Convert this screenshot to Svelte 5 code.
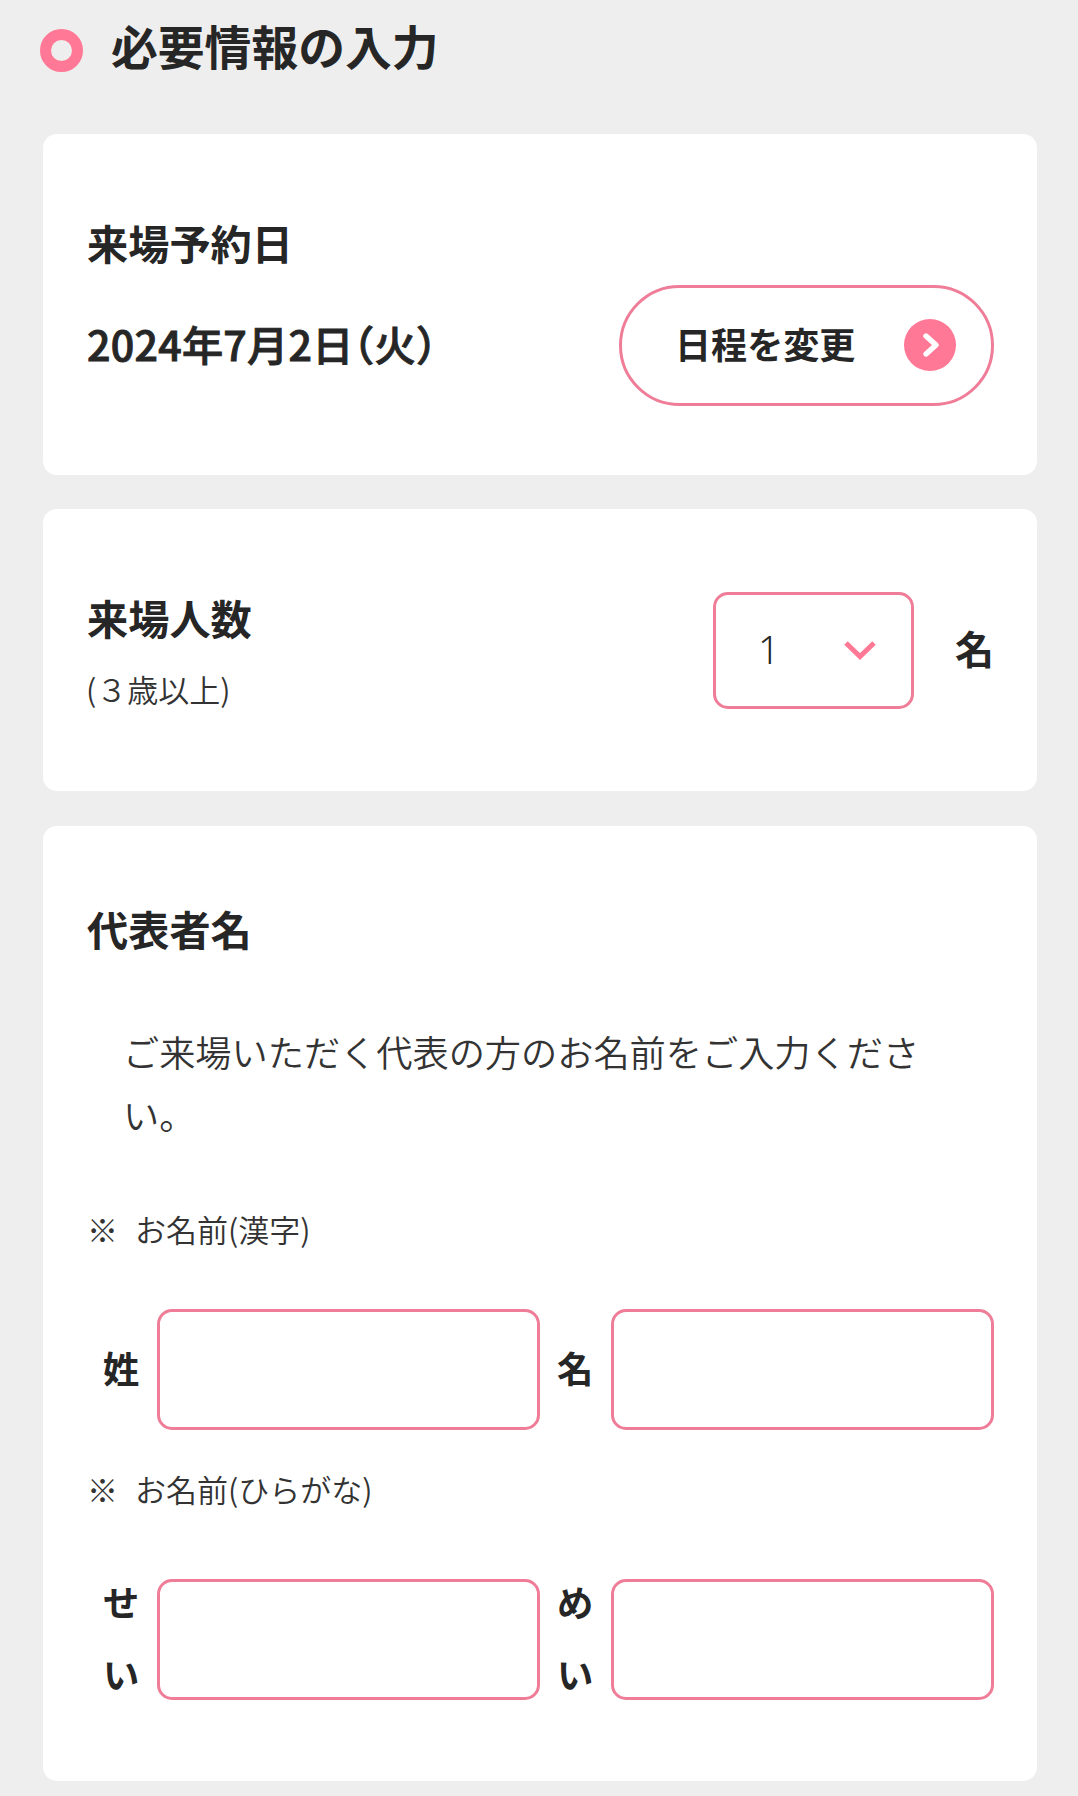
<script lang="ts">
	interface NameField {
		id: string;
		label: string;
	}

	interface NameGroup {
		title: string;
		fields: NameField[];
	}

	const visitDate = '2024年7月2日（火）';

	const nameGroups: NameGroup[] = [
		{
			title: 'お名前(漢字)',
			fields: [
				{ id: 'last-name', label: '姓' },
				{ id: 'first-name', label: '名' }
			]
		},
		{
			title: 'お名前(ひらがな)',
			fields: [
				{ id: 'last-kana', label: 'せい' },
				{ id: 'first-kana', label: 'めい' }
			]
		}
	];

	let visitors = $state('1');
	let names: Record<string, string> = $state({
		'last-name': '',
		'first-name': '',
		'last-kana': '',
		'first-kana': ''
	});
</script>

<main class="page">
	<header class="page-header">
		<span class="ring"></span>
		<h1>必要情報の入力</h1>
	</header>

	<section class="card date-card">
		<h2>来場予約日</h2>
		<div class="date-row">
			<span class="date">{visitDate}</span>
			<button class="change-button" type="button">
				<span>日程を変更</span>
				<svg viewBox="0 0 52 52" aria-hidden="true">
					<circle cx="26" cy="26" r="26" fill="#ff7895" />
					<path
						d="M22 17 L32 26 L22 35"
						fill="none"
						stroke="#fff"
						stroke-width="5.4"
						stroke-linecap="round"
						stroke-linejoin="round"
					/>
				</svg>
			</button>
		</div>
	</section>

	<section class="card visitors-card">
		<div class="visitors-title">
			<h2>来場人数</h2>
			<p>(３歳以上)</p>
		</div>
		<div class="visitors-input">
			<div class="select-box">
				<select bind:value={visitors} aria-label="来場人数">
					{#each ['1', '2', '3', '4', '5', '6'] as count}
						<option value={count}>{count}</option>
					{/each}
				</select>
				<svg viewBox="0 0 32 20" aria-hidden="true">
					<path d="M2 2 L16 15.5 L30 2" fill="none" stroke="#ff7895" stroke-width="5" />
				</svg>
			</div>
			<span class="unit">名</span>
		</div>
	</section>

	<section class="card names-card">
		<h2>代表者名</h2>
		<p class="description">ご来場いただく代表の方のお名前をご入力ください。</p>

		{#each nameGroups as group}
			<div class="name-group">
				<p class="note"><span>※</span>{group.title}</p>
				<div class="fields">
					{#each group.fields as field}
						<label for={field.id}>{field.label}</label>
						<input id={field.id} type="text" bind:value={names[field.id]} />
					{/each}
				</div>
			</div>
		{/each}
	</section>
</main>

<style>
	:global(body) {
		background: #eee;
	}

	.page {
		box-sizing: border-box;
		min-height: 1796px;
		padding: 14px 41px 15px 43px;
		background: #eee;
		color: #262626;
		font-family: 'Noto Sans CJK JP', sans-serif;
		font-weight: 350;
	}

	h1,
	h2,
	p {
		margin: 0;
	}

	p {
		color: #333;
	}

	.page-header {
		display: flex;
		align-items: flex-start;
		gap: 28px;
		height: 120px;
		margin-left: -3px;
	}

	.ring {
		box-sizing: border-box;
		width: 43px;
		height: 43px;
		margin-top: 15px;
		border: 11px solid #ff7895;
		border-radius: 50%;
	}

	h1 {
		font-size: 46.8px;
		font-weight: 700;
		line-height: 61px;
	}

	h2 {
		font-size: 41.2px;
		font-weight: 700;
		line-height: 62px;
	}

	.card {
		box-sizing: border-box;
		padding: 77px 43px 0 44px;
		border-radius: 14px;
		background: #fff;
	}

	.date-card {
		height: 341px;
		margin-bottom: 34px;
	}

	.date-row {
		display: flex;
		align-items: center;
		justify-content: space-between;
		margin-top: 12px;
	}

	/* medium weight keeps the digits narrow, the stroke thickens them */
	.date {
		padding-bottom: 6px;
		font-size: 41.2px;
		font-weight: 500;
		line-height: 60px;
		letter-spacing: 0.25px;
		font-feature-settings: 'halt';
		-webkit-text-stroke: 0.9px currentColor;
	}

	.change-button {
		box-sizing: border-box;
		display: flex;
		align-items: center;
		justify-content: space-between;
		width: 375px;
		height: 121px;
		padding: 0 35px 0 53px;
		border: 3px solid #ef7d98;
		border-radius: 61px;
		background: #fff;
		color: inherit;
		font-family: inherit;
		font-size: 36.1px;
		font-weight: 700;
	}

	.change-button span {
		padding-bottom: 6px;
		line-height: 52px;
	}

	.change-button svg {
		width: 52px;
		height: 52px;
		margin-bottom: 1px;
	}

	.visitors-card {
		display: flex;
		justify-content: space-between;
		height: 282px;
		margin-bottom: 35px;
	}

	.visitors-title p {
		margin: 18px 0 0 -1px;
		font-size: 31px;
		line-height: 46px;
	}

	.visitors-input {
		display: flex;
		align-items: center;
		gap: 41px;
		height: 117px;
		margin-top: 6px;
	}

	.select-box {
		box-sizing: border-box;
		display: flex;
		align-items: center;
		width: 201px;
		height: 117px;
		padding-right: 35px;
		border: 3px solid #ef7d98;
		border-radius: 15px;
	}

	select {
		flex: 1;
		height: 100%;
		padding: 0 0 4px 42px;
		border: 0;
		outline: 0;
		appearance: none;
		background: transparent;
		color: inherit;
		font-family: 'Noto Sans', 'Noto Sans CJK JP', sans-serif;
		font-size: 38px;
		font-weight: 300;
	}

	.select-box svg {
		width: 32px;
		height: 20px;
	}

	.unit {
		padding-bottom: 7px;
		font-size: 39px;
		font-weight: 700;
		line-height: 60px;
	}

	.names-card {
		height: 955px;
		padding-top: 71px;
	}

	.description {
		margin: 61px 38px 61px 36px;
		font-size: 36.2px;
		line-height: 62.5px;
	}

	.name-group + .name-group {
		margin-top: 36px;
	}

	.name-group + .name-group .fields {
		margin-top: 58px;
	}

	.note {
		display: flex;
		gap: 17px;
		font-size: 31px;
		line-height: 46px;
	}

	.fields {
		display: grid;
		grid-template-columns: 37px 383px 37px 383px;
		column-gap: 17px;
		align-items: center;
		margin-top: 57px;
		padding-left: 16px;
	}

	label {
		margin-top: -5px;
		font-size: 36.3px;
		font-weight: 700;
		line-height: 72px;
		word-break: break-all;
	}

	.fields input {
		box-sizing: border-box;
		width: 383px;
		height: 121px;
		padding: 0 24px;
		border: 3px solid #ef7d98;
		border-radius: 15px;
		outline: 0;
		background: #fff;
		color: inherit;
		font-family: inherit;
		font-size: 36px;
	}
</style>
